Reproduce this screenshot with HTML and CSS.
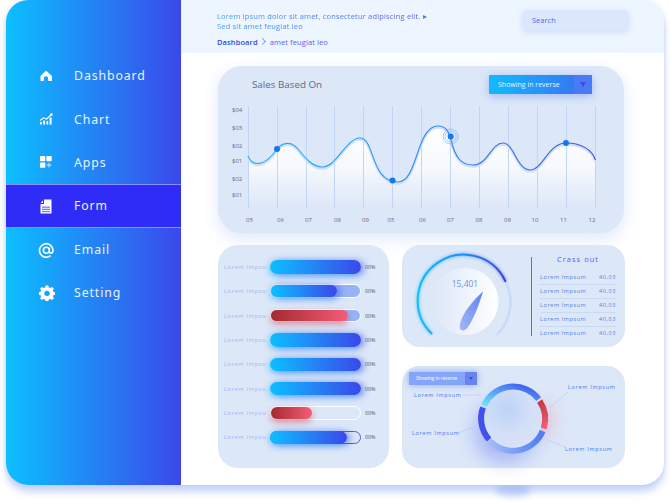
FILE: index.html

```html
<!DOCTYPE html>
<html lang="en">
<head>
  <meta charset="UTF-8" />
  <meta name="viewport" content="width=device-width, initial-scale=1.0" />
  <title>Dashboard</title>
  <link rel="stylesheet" href="styles.css">
</head>
<body>
  <div class="under-glow"></div>
  <div class="window">
    <aside class="sidebar">
      <a class="nav-item">
        <svg class="nav-icon" viewBox="0 0 14 14"><path d="M7 2 C7.4 2 7.8 2.2 8 2.5 L13 7 V12 H9.2 V9.5 A2.2 2.2 0 0 0 4.8 9.5 V12 H1.5 V7 L6 2.5 C6.2 2.2 6.6 2 7 2 Z" fill="#fff"/></svg>
        Dashboard
      </a>
      <a class="nav-item">
        <svg class="nav-icon" viewBox="0 1 14 14"><path d="M1 13.5 V11 H2.8 V13.5 Z M4.2 13.5 V9.5 H6 V13.5 Z M7.4 13.5 V10 H9.2 V13.5 Z M10.6 13.5 V6.5 H12.6 V13.5 Z" fill="#fff"/><path d="M1 9.5 L4.6 6.8 L7.6 8 L12 4" fill="none" stroke="#fff" stroke-width="1.1"/><circle cx="12.4" cy="3.6" r="1.4" fill="#fff"/></svg>
        Chart
      </a>
      <a class="nav-item">
        <svg class="nav-icon" viewBox="0 1 14 14"><rect x="1" y="2" width="5.3" height="5.3" rx="0.8" fill="#fff"/><rect x="7.4" y="2" width="5.3" height="5.3" rx="0.8" fill="#fff"/><rect x="1" y="8.4" width="5.3" height="5.3" rx="0.8" fill="#fff"/><path d="M10 8.8 V13.4 M7.7 11.1 H12.4" stroke="#dfe9ff" stroke-width="1"/></svg>
        Apps
      </a>
      <a class="nav-item active">
        <svg class="nav-icon" viewBox="1 0.5 14 14"><path d="M6 1 H13.5 V15 H2.5 V5.4 H6 Z" fill="#fff"/><path d="M5 1.8 V4.4 H2.6 Z" fill="#fff"/><rect x="4" y="8" width="8" height="1.3" fill="#7a78f5"/><rect x="4" y="10.2" width="8" height="1.3" fill="#7a78f5"/><rect x="4" y="12.4" width="8" height="1.3" fill="#7a78f5"/></svg>
        Form
      </a>
      <a class="nav-item">
        <svg class="nav-icon" viewBox="0.5 0.5 14.5 14.5"><path d="M12.5 13.6 A7 7 0 1 1 15 8 C15 10 14 11 12.8 11 C11.8 11 11.2 10.4 11.2 9.4 V5.2 M11.2 8 A3.1 3.1 0 1 1 5 8 A3.1 3.1 0 1 1 11.2 8" fill="none" stroke="#fff" stroke-width="1.7"/></svg>
        Email
      </a>
      <a class="nav-item">
        <svg class="nav-icon" viewBox="0 1 14 14"><path fill="#fff" fill-rule="evenodd" d="M6.6 0.5 H9.4 L9.8 2.6 L11.3 3.2 L13.1 2 L15 3.9 L13.8 5.7 L14.4 7.2 L16 7.6 V10.4 L14.4 10.8 L13.8 12.3 L15 14.1 L13.1 16 L11.3 14.8 L9.8 15.4 L9.4 17 H6.6 L6.2 15.4 L4.7 14.8 L2.9 16 L1 14.1 L2.2 12.3 L1.6 10.8 L0 10.4 V7.6 L1.6 7.2 L2.2 5.7 L1 3.9 L2.9 2 L4.7 3.2 L6.2 2.6 Z M8 6.2 A2.8 2.8 0 1 0 8.01 6.2 Z" transform="scale(1 0.94)"/></svg>
        Setting
      </a>
    </aside>

    <div class="main">
      <header class="topbar">
        <div class="topbar-text">
          <p class="intro">Lorem ipsum dolor sit amet, consectetur adipiscing elit. <span class="intro-arrow"></span><br>Sed sit amet feugiat leo</p>
          <p class="crumbs"><b>Dashboard</b><span class="crumb-sep"></span>amet feugiat leo</p>
        </div>
        <div class="search">Search</div>
      </header>

      <div class="content">
        <section class="card chart-card">
          <div class="chart-head">
            <h2>Sales Based On</h2>
            <div class="select">
              <span class="select-label">Showing in reverse</span>
              <span class="select-btn"><i class="caret"></i></span>
            </div>
          </div>
          <svg class="chart" viewBox="218 103 406 130">
            <defs>
              <linearGradient id="area" x1="0" y1="0" x2="0" y2="1">
                <stop offset="0" stop-color="#fff"/>
                <stop offset="0.5" stop-color="#fff" stop-opacity="0.75"/>
                <stop offset="1" stop-color="#fff" stop-opacity="0"/>
              </linearGradient>
              <linearGradient id="line" x1="0" y1="0" x2="1" y2="0">
                <stop offset="0" stop-color="#22b2fd"/>
                <stop offset="0.5" stop-color="#2a90f5"/>
                <stop offset="1" stop-color="#3a50e4"/>
              </linearGradient>
              <path id="curve" d="M248 156 C252 166 264 168 277 149 C283 142 291 141 298 149 C306 159 313 167 322 167 C336 168 346 138 360 138 C375 138 370 182 398 182 C418 182 416 126 438 126 C447 126 449 133 451 140 C455 156 460 165 473 165 C488 165 491 143 503 143 C514 143 517 170 530 170 C543 170 548 143 566 143 C580 143 592 149 595.5 160"/>
            </defs>
            <path d="M248 156 C252 166 264 168 277 149 C283 142 291 141 298 149 C306 159 313 167 322 167 C336 168 346 138 360 138 C375 138 370 182 398 182 C418 182 416 126 438 126 C447 126 449 133 451 140 C455 156 460 165 473 165 C488 165 491 143 503 143 C514 143 517 170 530 170 C543 170 548 143 566 143 C580 143 592 149 595.5 160 V208 H248 Z" fill="url(#area)"/>
            <g class="grid-lines">
              <path d="M248.5 106 V208 M277.5 106 V208 M306.5 106 V208 M334.5 106 V208 M363.5 106 V208 M392.5 106 V208 M421.5 106 V208 M450.5 106 V208 M479.5 106 V208 M508.5 106 V208 M537.5 106 V208 M566.5 106 V208 M595.5 106 V208"/>
            </g>
            <use href="#curve" class="curve-shade"/>
            <use href="#curve" class="curve" stroke="url(#line)"/>
            <circle class="dot" cx="277" cy="149" r="3"/>
            <circle class="dot" cx="392.5" cy="180.5" r="3"/>
            <circle class="dot" cx="566" cy="143" r="3"/>
            <g class="ripple">
              <circle cx="450.7" cy="136.5" r="7.5"/>
              <circle cx="450.7" cy="136.5" r="5.5"/>
            </g>
            <circle class="dot" cx="450.7" cy="136.5" r="3"/>
            <g class="y-labels">
              <text x="232" y="112">$04</text>
              <text x="232" y="130">$03</text>
              <text x="232" y="148">$02</text>
              <text x="232" y="163">$01</text>
              <text x="232" y="181">$02</text>
              <text x="232" y="197">$01</text>
            </g>
            <g class="x-labels">
              <text x="249.5" y="221.5">05</text>
              <text x="280.5" y="221.5">06</text>
              <text x="308.5" y="221.5">07</text>
              <text x="337.5" y="221.5">08</text>
              <text x="365.5" y="221.5">09</text>
              <text x="391" y="221.5">05</text>
              <text x="422.5" y="221.5">06</text>
              <text x="450.5" y="221.5">07</text>
              <text x="479" y="221.5">08</text>
              <text x="507.5" y="221.5">09</text>
              <text x="535" y="221.5">10</text>
              <text x="563.5" y="221.5">11</text>
              <text x="592" y="221.5">12</text>
            </g>
          </svg>
        </section>

        <section class="card bars-card">
          <div class="bar-row"><span class="bar-label">Lorem Impsu</span><div class="track"><div class="fill" style="width:100%"></div></div><span class="bar-value">00%</span></div>
          <div class="bar-row"><span class="bar-label">Lorem Impsu</span><div class="track outlined tinted"><div class="fill" style="width:74%"></div></div><span class="bar-value">00%</span></div>
          <div class="bar-row"><span class="bar-label">Lorem Impsu</span><div class="track outlined tinted"><div class="fill red" style="width:87%"></div></div><span class="bar-value">00%</span></div>
          <div class="bar-row"><span class="bar-label">Lorem Impsu</span><div class="track"><div class="fill" style="width:100%"></div></div><span class="bar-value">00%</span></div>
          <div class="bar-row"><span class="bar-label">Lorem Impsu</span><div class="track"><div class="fill" style="width:100%"></div></div><span class="bar-value">00%</span></div>
          <div class="bar-row"><span class="bar-label">Lorem Impsu</span><div class="track"><div class="fill" style="width:100%"></div></div><span class="bar-value">00%</span></div>
          <div class="bar-row"><span class="bar-label">Lorem Impsu</span><div class="track outlined"><div class="fill red" style="width:46%"></div></div><span class="bar-value">00%</span></div>
          <div class="bar-row"><span class="bar-label">Lorem Impsu</span><div class="track blue-line"><div class="fill" style="width:86%"></div></div><span class="bar-value">00%</span></div>
        </section>

        <section class="card gauge-card">
          <svg class="gauge" viewBox="402 245 129 102">
            <defs>
              <linearGradient id="arc" x1="0" y1="0" x2="1" y2="0">
                <stop offset="0" stop-color="#12bdff"/>
                <stop offset="0.55" stop-color="#1c8ef5"/>
                <stop offset="1" stop-color="#3a3fe0"/>
              </linearGradient>
              <linearGradient id="disk" x1="0" y1="0" x2="1" y2="0">
                <stop offset="0" stop-color="#dce7f8"/>
                <stop offset="1" stop-color="#fff"/>
              </linearGradient>
              <linearGradient id="needle" x1="0" y1="1" x2="1" y2="0">
                <stop offset="0" stop-color="#a3b8f6"/>
                <stop offset="1" stop-color="#5d83f0"/>
              </linearGradient>
              <filter id="arc-glow" x="-20%" y="-20%" width="140%" height="140%"><feGaussianBlur stdDeviation="1.5"/></filter>
            </defs>
            <circle cx="465" cy="301.5" r="33.5" fill="url(#disk)"/>
            <path d="M505.3 281 A46 46 0 0 1 497.7 334" class="arc-base"/>
            <path d="M431.5 333.5 A46 46 0 1 1 505.3 281" fill="none" stroke="url(#arc)" stroke-width="3" opacity="0.55" filter="url(#arc-glow)"/>
            <path d="M431.5 333.5 A46 46 0 1 1 505.3 281" fill="none" stroke="url(#arc)" stroke-width="2" stroke-linecap="round"/>
            <path d="M483 291.5 C479 305 474 318 468 327 C465 332 458 332 460 324 C462 314 473 300 483 291.5 Z" fill="url(#needle)"/>
            <text class="gauge-value" x="465" y="287">15,401</text>
          </svg>
          <div class="list">
            <h3>Crass out</h3>
            <div class="list-row"><span>Lorem Impsum</span><span>40,03</span></div>
            <div class="list-row"><span>Lorem Impsum</span><span>40,03</span></div>
            <div class="list-row"><span>Lorem Impsum</span><span>40,03</span></div>
            <div class="list-row"><span>Lorem Impsum</span><span>40,03</span></div>
            <div class="list-row"><span>Lorem Impsum</span><span>40,03</span></div>
          </div>
        </section>

        <section class="card donut-card">
          <svg class="donut" viewBox="402 366 223 102">
            <defs>
              <filter id="blur-big" x="-80%" y="-80%" width="260%" height="260%"><feGaussianBlur stdDeviation="10"/></filter>
              <linearGradient id="seg-top" x1="0" y1="1" x2="1" y2="0">
                <stop offset="0" stop-color="#6fe6fb"/>
                <stop offset="0.5" stop-color="#5a9cf6"/>
                <stop offset="1" stop-color="#3b54ee"/>
              </linearGradient>
              <linearGradient id="seg-low" x1="0" y1="0" x2="1" y2="0">
                <stop offset="0" stop-color="#a4bbf5"/>
                <stop offset="1" stop-color="#4f7df2"/>
              </linearGradient>
              <linearGradient id="seg-red" x1="0" y1="0" x2="0" y2="1">
                <stop offset="0" stop-color="#c63a46"/>
                <stop offset="1" stop-color="#f2606f"/>
              </linearGradient>
              <radialGradient id="hole" cx="0.4" cy="0.35" r="0.7">
                <stop offset="0" stop-color="#bdd3f6"/>
                <stop offset="0.6" stop-color="#d3e0f8"/>
                <stop offset="1" stop-color="#dbe2f6"/>
              </radialGradient>
            </defs>
            <circle cx="505" cy="432" r="30" fill="#4a5cf0" opacity="0.38" filter="url(#blur-big)"/>
            <circle cx="538" cy="420" r="13" fill="#f07a80" opacity="0.5" filter="url(#blur-big)"/>
            <circle cx="513" cy="418.3" r="30" fill="url(#hole)"/>
            <g class="ring">
              <path d="M483.9 405.7 A32 32 0 0 1 538.6 399.1" stroke="url(#seg-top)"/>
              <path d="M539.6 401 A32 32 0 0 1 543.6 428.5" stroke="url(#seg-red)"/>
              <path d="M542.6 431 A32 32 0 0 1 490.5 441.5" stroke="url(#seg-low)"/>
              <path d="M489 439.5 A32 32 0 0 1 483 407.5" stroke="#4150f0"/>
            </g>
            <g class="leaders">
              <path d="M462 395 H481"/>
              <path d="M549 408 L568 392"/>
              <path d="M459 433 L476 426"/>
              <path d="M547 440 L565 447"/>
            </g>
            <g class="donut-labels">
              <text x="414" y="397">Lorem Impsum</text>
              <text x="568" y="389">Lorem Impsum</text>
              <text x="412" y="435">Lorem Impsum</text>
              <text x="565" y="451">Lorem Impsum</text>
            </g>
          </svg>
          <div class="select small">
            <span class="select-label">Showing in reverse</span>
            <span class="select-btn"><i class="caret"></i></span>
          </div>
        </section>
      </div>
    </div>
  </div>
</body>
</html>
```

FILE: styles.css

```css
html, body { height: 100%; }
body {
  position: relative;
  margin: 0;
  background: #fff;
  font-family: "Open Sans", sans-serif;
  overflow: hidden;
}
p, h2, h3 { margin: 0; font-weight: normal; }

.window {
  position: relative;
  display: flex;
  width: 658px;
  height: 485px;
  margin-left: 6px;
  background: #fff;
  border-radius: 22px;
  overflow: hidden;
  box-shadow: 0 7px 7px rgba(90, 130, 235, 0.32), 0 0 5px rgba(90, 130, 235, 0.18);
}
.under-glow {
  position: absolute;
  left: 495px;
  top: 484px;
  width: 36px;
  height: 13px;
  border-radius: 50%;
  background: #cddbf8;
  filter: blur(3px);
}

/* sidebar */
.sidebar {
  width: 175px;
  flex: none;
  padding-top: 54.4px;
  box-sizing: border-box;
  background: linear-gradient(90deg, #0cbfff, #3b48ea);
}
.nav-item {
  display: flex;
  align-items: center;
  height: 43.2px;
  padding-left: 33px;
  color: #eaf2ff;
  font-family: "Noto Sans", sans-serif;
  font-size: 12.3px;
  letter-spacing: 0.9px;
}
.nav-icon { width: 14px; height: 14px; margin-right: 21px; overflow: visible; }
.active {
  height: 44px;
  box-sizing: border-box;
  background: #2f2cf8;
  border-top: 1px solid #8a90fb;
  border-bottom: 1px solid #8a90fb;
}

/* top bar */
.main { flex: 1; display: flex; flex-direction: column; min-width: 0; }
.topbar {
  display: flex;
  justify-content: space-between;
  height: 53px;
  flex: none;
  padding: 11px 36px 0 36px;
  box-sizing: border-box;
  background: #edf5ff;
}
.intro {
  font-size: 7.5px;
  line-height: 10px;
  letter-spacing: 0.18px;
  background: linear-gradient(90deg, #3f9bf8, #5b58ee);
  -webkit-background-clip: text;
  background-clip: text;
  color: transparent;
}
.intro-arrow {
  display: inline-block;
  border-left: 4px solid #3f7cf2;
  border-top: 2.5px solid transparent;
  border-bottom: 2.5px solid transparent;
}
.crumbs { margin-top: 6px; font-size: 7.5px; letter-spacing: 0.1px; color: #5b62ec; }
.crumbs b { color: #3246dc; font-weight: 600; }
.crumb-sep {
  display: inline-block;
  width: 4px;
  height: 4px;
  margin: 0 5px 1px 2px;
  border-top: 1px solid #8aa0ea;
  border-right: 1px solid #8aa0ea;
  transform: rotate(45deg);
}
.search {
  width: 105px;
  height: 20px;
  margin-top: -1px;
  padding-left: 9px;
  box-sizing: border-box;
  background: #dbe7fa;
  border-radius: 3px;
  box-shadow: 0 2px 6px rgba(120, 160, 240, 0.3);
  font-size: 7.5px;
  line-height: 21px;
  color: #5a68ee;
}

/* cards */
.content {
  display: grid;
  grid-template-columns: 171px 223px;
  grid-template-rows: 167px 102px 109px;
  column-gap: 13px;
  row-gap: 12px;
  padding: 13px 0 0 37px;
}
.card {
  background: #dce7f8;
  border-radius: 18px;
}
.chart-card {
  grid-column: 1 / 3;
  width: 406px;
  border-radius: 24px;
  box-shadow: 0 6px 16px rgba(110, 150, 245, 0.22);
}
.chart-head {
  display: flex;
  justify-content: space-between;
  align-items: center;
  height: 36px;
  margin-bottom: 1px;
  padding: 0 32px 0 34px;
}
.chart-head h2 { font-size: 9.8px; color: #5f6a80; }
.select {
  display: flex;
  width: 103px;
  height: 19px;
  background: linear-gradient(90deg, #10bbff, #3d6cf0);
  box-shadow: 0 2px 8px rgba(70, 110, 240, 0.4);
  color: #eaf3ff;
  font-size: 7px;
  line-height: 19px;
}
.select-label { flex: 1; padding-left: 9px; white-space: nowrap; }
.select-btn {
  width: 18px;
  display: flex;
  align-items: center;
  justify-content: center;
  background: #4a7bf5;
}
.caret {
  border-top: 5px solid #3f48e0;
  border-left: 3px solid transparent;
  border-right: 3px solid transparent;
}
.chart { display: block; width: 406px; height: 130px; }
.grid-lines path { stroke: #c3d5f7; stroke-width: 1; fill: none; }
.curve { fill: none; stroke-width: 1.1; }
.curve-shade { fill: none; stroke: #d3dff7; stroke-width: 2.5; transform: translateY(1.5px); }
.dot { fill: #1478f0; }
.ripple circle { fill: none; stroke: #6fa9f3; stroke-width: 0.6; }
.y-labels text, .x-labels text {
  font-family: "Open Sans", sans-serif;
  font-size: 6px;
  fill: #5f6a80;
}
.x-labels text { text-anchor: middle; }

/* progress bars */
.bars-card {
  grid-row: 2 / 4;
  display: flex;
  flex-direction: column;
  gap: 10.9px;
  padding: 15px 0 0 6px;
  box-sizing: border-box;
  border-radius: 20px;
}
.bar-row { display: flex; align-items: center; height: 13.5px; }
.bar-label {
  width: 46px;
  font-size: 5.5px;
  letter-spacing: 0.75px;
  color: #9db4f3;
  white-space: nowrap;
}
.track {
  width: 91px;
  height: 13.5px;
  box-sizing: border-box;
  border-radius: 7px;
}
.track.outlined { border: 1px solid #fff; }
.track.tinted { background: #96b3f6; }
.track.blue-line { border: 1px solid #4a5cf0; }
.track.blue-line .fill { height: 13.5px; margin: -1px 0 0 -1px; }
.fill {
  height: 100%;
  border-radius: 7px;
  background: linear-gradient(90deg, #0cbfff, #3b48ea);
  box-shadow: -2px 2px 6px rgba(20, 190, 255, 0.4), 3px 1px 7px rgba(50, 70, 240, 0.6);
}
.fill.red {
  background: linear-gradient(90deg, #a32a30, #f65c78);
  box-shadow: 0 3px 7px rgba(215, 60, 70, 0.55);
}
.bar-value { margin-left: 4px; font-size: 5.3px; color: #4e5670; }

/* gauge */
.gauge-card {
  display: flex;
  height: 102px;
}
.gauge { width: 129px; height: 102px; flex: none; }
.arc-base { fill: none; stroke: #c9daf8; stroke-width: 2.5; stroke-linecap: round; }
.gauge-value { font-size: 8.5px; text-anchor: middle; fill: #6f93e0; }
.list {
  width: 94px;
  height: 79px;
  margin-top: 12px;
  padding: 0 9px 0 8px;
  box-sizing: border-box;
  border-left: 1px solid #4a78e4;
}
.list h3 {
  height: 14px;
  font-size: 7.5px;
  line-height: 4px;
  letter-spacing: 1px;
  text-align: center;
  color: #5a5ef0;
}
.list-row {
  display: flex;
  justify-content: space-between;
  height: 14px;
  border-bottom: 1px solid #c9d8f3;
  box-sizing: border-box;
  font-size: 5.5px;
  letter-spacing: 0.6px;
  line-height: 12px;
  color: #4f7fe8;
  white-space: nowrap;
}
.list-row:last-child { border-bottom: none; }

/* donut */
.donut-card { position: relative; height: 102px; margin-top: 7px; }
.donut { display: block; width: 223px; height: 102px; overflow: visible; }
.ring path { fill: none; stroke-width: 6; }
.leaders path { fill: none; stroke: #b9ccf3; stroke-width: 0.7; }
.donut-labels text {
  font-size: 5.5px;
  letter-spacing: 0.7px;
  fill: #3f78ee;
}
.select.small {
  position: absolute;
  left: 7px;
  top: 6px;
  width: 68px;
  height: 13px;
  background: #85a5f8;
  box-shadow: 0 0 6px rgba(80, 110, 240, 0.55);
  font-size: 4.5px;
  line-height: 13px;
  font-weight: 600;
}
.select.small .select-label { padding-left: 7px; }
.select.small .select-btn { width: 12px; background: #6a84ee; }
.select.small .caret { border-top-width: 3px; border-left-width: 2px; border-right-width: 2px; }
```
